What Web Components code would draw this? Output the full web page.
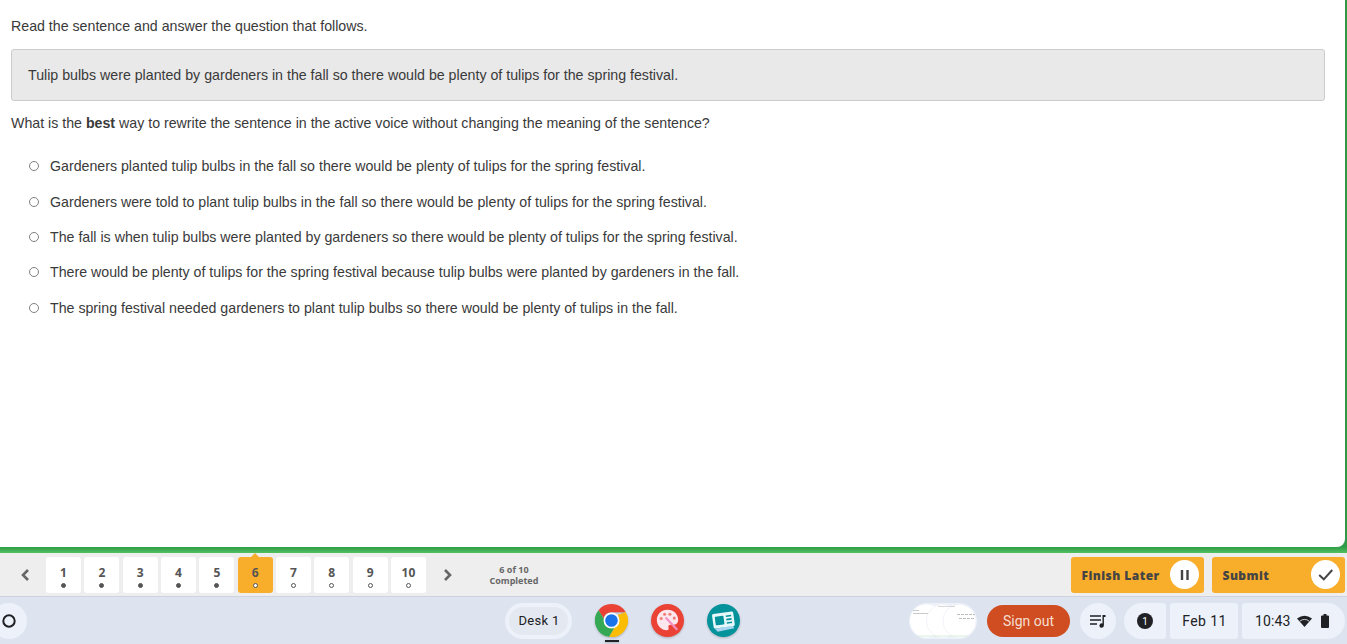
<!DOCTYPE html>
<html lang="en">
<head>
<meta charset="utf-8">
<title>Test</title>
<style>
  html, body { margin: 0; height: 100%; overflow: hidden; }
  body { display: flex; flex-direction: column; height: 644px; font-family: "Liberation Sans", Arial, sans-serif; }
</style>
</head>
<body>
<test-page>
  <answer-option>Gardeners planted tulip bulbs in the fall so there would be plenty of tulips for the spring festival.</answer-option>
  <answer-option>Gardeners were told to plant tulip bulbs in the fall so there would be plenty of tulips for the spring festival.</answer-option>
  <answer-option>The fall is when tulip bulbs were planted by gardeners so there would be plenty of tulips for the spring festival.</answer-option>
  <answer-option>There would be plenty of tulips for the spring festival because tulip bulbs were planted by gardeners in the fall.</answer-option>
  <answer-option>The spring festival needed gardeners to plant tulip bulbs so there would be plenty of tulips in the fall.</answer-option>
</test-page>
<question-nav></question-nav>
<os-shelf></os-shelf>
<script>
class TestPage extends HTMLElement {
  constructor() {
    super();
    this.attachShadow({ mode: 'open' });
    this.shadowRoot.innerHTML = `
    <style>
      :host {
        display: block;
        height: 553px;
        background: linear-gradient(#2e9a49 541px, #2f9c47 547px, #52c061 553px);
        flex: none;
      }
      .sheet {
        box-sizing: border-box;
        height: 547px;
        margin-right: 2px;
        background: white;
        border-bottom-right-radius: 8px;
        padding: 18px 20px 0 11px;
        font-size: 14.2px;
        color: #3a3a3a;
      }
      p { margin: 0; line-height: 16px; }
      .stem {
        box-sizing: border-box;
        height: 52px;
        margin: 15px 0 14px;
        padding: 17px 16px;
        background: #e9e9e9;
        border: 1px solid #ccc;
        border-radius: 3px;
        line-height: 16px;
      }
      .options { display: flex; flex-direction: column; gap: 19.3px; margin-top: 27.45px; padding-left: 18px; }
    </style>
    <div class="sheet">
      <p>Read the sentence and answer the question that follows.</p>
      <div class="stem">Tulip bulbs were planted by gardeners in the fall so there would be plenty of tulips for the spring festival.</div>
      <p>What is the <b>best</b> way to rewrite the sentence in the active voice without changing the meaning of the sentence?</p>
      <div class="options"><slot></slot></div>
    </div>`;
  }
}

class AnswerOption extends HTMLElement {
  constructor() {
    super();
    this.attachShadow({ mode: 'open' });
    this.shadowRoot.innerHTML = `
    <style>
      :host { display: flex; align-items: center; gap: 11px; height: 16px; line-height: 16px; }
      i { box-sizing: border-box; width: 10px; height: 10px; border: 1px solid #808080; border-radius: 50%; background: #fff; flex: none; }
    </style>
    <i></i><span><slot></slot></span>`;
  }
}

class NavItem extends HTMLElement {
  constructor() {
    super();
    this.attachShadow({ mode: 'open' });
    const done = this.hasAttribute('done');
    const current = this.hasAttribute('current');
    this.shadowRoot.innerHTML = `
    <style>
      :host {
        position: relative;
        box-sizing: border-box;
        display: flex;
        flex-direction: column;
        align-items: center;
        width: 35px;
        height: 36px;
        padding-top: 9px;
        flex: none;
        background: ${current ? '#f9ae2b' : 'white'};
        border-radius: 3px;
        color: #555;
        font: 700 12px/14px "Open Sans", sans-serif;
      }
      .dot {
        box-sizing: border-box;
        width: 5px;
        height: 5px;
        margin-top: 3px;
        border-radius: 50%;
        border: 1px solid #555;
        background: ${done ? '#555' : 'white'};
      }
      .tip {
        position: absolute;
        top: -4px;
        left: 50%;
        margin-left: -5px;
        border: 5px solid transparent;
        border-top: 0;
        border-bottom-color: #f9ae2b;
        display: ${current ? 'block' : 'none'};
      }
    </style>
    <span class="tip"></span>
    <span>${this.getAttribute('n')}</span>
    <span class="dot"></span>`;
  }
}

class ActionButton extends HTMLElement {
  constructor() {
    super();
    this.attachShadow({ mode: 'open' });
    const icon = this.getAttribute('icon') == 'pause'
      ? '<path d="M6 4v10M11.500 4v10" stroke="#444" stroke-width="2.400" fill="none"/>'
      : '<path d="M2.200 9l4.600 4.300L15.200 4" stroke="#444" stroke-width="2" fill="none"/>';
    this.shadowRoot.innerHTML = `
    <style>
      :host {
        box-sizing: border-box;
        display: flex;
        align-items: center;
        justify-content: space-between;
        width: 133px;
        height: 36px;
        padding: 0 5px 0 10.5px;
        background: #f9ae2b;
        border-radius: 3px;
        color: #444;
        font: 800 12px/14px "Open Sans", sans-serif;
        letter-spacing: .45px;
      }
      .label { padding-top: 2px; }
      .round { display: flex; align-items: center; justify-content: center; width: 29px; height: 29px; background: white; border-radius: 50%; }
    </style>
    <span class="label"><slot></slot></span>
    <span class="round"><svg width="18" height="18" viewBox="0 0 18 18">${icon}</svg></span>`;
  }
}

class QuestionNav extends HTMLElement {
  constructor() {
    super();
    this.attachShadow({ mode: 'open' });
    let items = '';
    for (let n = 1; n <= 10; n++) {
      items += `<nav-item n="${n}" ${n <= 5 ? 'done' : ''} ${n == 6 ? 'current' : ''}></nav-item>`;
    }
    this.shadowRoot.innerHTML = `
    <style>
      :host {
        box-sizing: border-box;
        display: flex;
        align-items: center;
        height: 44px;
        flex: none;
        padding: 0 2px 0 19px;
        background: #eee;
        border-bottom: 1px solid #cdd2de;
      }
      .items { display: flex; gap: 3.33px; margin: 0 15px 0 14px; }
      svg { display: block; flex: none; }
      .count { width: 60px; margin-left: 30px; text-align: center; color: #666; font: 700 9px/11px "Open Sans", sans-serif; }
      .actions { display: flex; gap: 8px; margin-left: auto; }
    </style>
    <svg width="13" height="14" viewBox="0 0 13 14"><path d="M9 2L4 7l5 5" stroke="#666" stroke-width="2.600" fill="none"/></svg>
    <div class="items">${items}</div>
    <svg width="13" height="14" viewBox="0 0 13 14"><path d="M4 2l5 5-5 5" stroke="#666" stroke-width="2.600" fill="none"/></svg>
    <div class="count">6 of 10<br>Completed</div>
    <div class="actions">
      <action-button icon="pause">Finish Later</action-button>
      <action-button icon="check">Submit</action-button>
    </div>`;
  }
}

class OsShelf extends HTMLElement {
  constructor() {
    super();
    this.attachShadow({ mode: 'open' });
    this.shadowRoot.innerHTML = `
    <style>
      :host {
        box-sizing: border-box;
        display: flex;
        align-items: center;
        flex: 1;
        padding-right: 2px;
        background: #dde3ef;
        color: #202124;
        font: 400 14px/16px Roboto, sans-serif;
      }
      .launcher { display: flex; align-items: center; justify-content: flex-end; box-sizing: border-box; width: 36px; height: 36px; margin-left: -9px; padding-right: 11px; border-radius: 50%; background: #edf1f9; }
      .desk { box-sizing: border-box; display: flex; align-items: center; justify-content: center; width: 67px; height: 36px; margin-left: 478px; border: 4px solid #edf1f9; border-radius: 18px; background: #e4e8f0; font-size: 13px; letter-spacing: .3px; padding-left: 1px; }
      .apps { display: flex; gap: 23px; margin-left: 23px; }
      .app { position: relative; width: 33px; height: 33px; filter: drop-shadow(0 1px 1px rgba(0, 0, 0, .22)); }
      .app svg { display: block; }
      .running::after { content: ''; position: absolute; left: 10px; bottom: -5px; width: 14px; height: 2px; background: #202124; }
      .tote { width: 68px; height: 36px; margin-left: 169px; }
      .tote svg { display: block; }
      .signout { display: flex; align-items: center; justify-content: center; width: 83px; height: 32px; margin-left: 10px; border-radius: 16px; background: #cf4d20; color: #f5ddd2; font-size: 14px; }
      .pill { display: flex; align-items: center; justify-content: center; height: 36px; background: #edf1f9; }
      .music { width: 36px; border-radius: 50%; margin-left: 10px; }
      .badge { width: 42px; margin-left: 8px; border-radius: 18px 3px 3px 18px; }
      .date { width: 68px; margin-left: 4px; border-radius: 3px; letter-spacing: .4px; padding-left: 1px; box-sizing: border-box; }
      .clock { box-sizing: border-box; width: 103px; margin-left: 4px; padding-left: 13px; justify-content: flex-start; border-radius: 3px 18px 18px 3px; letter-spacing: .1px; }
      .wifi { margin-left: 7px; }
      .battery { margin-left: 9px; }
    </style>
    <div class="launcher"><svg width="14" height="14" viewBox="0 0 14 14"><circle cx="7" cy="7" r="5.700" stroke="#202124" stroke-width="2" fill="none"/></svg></div>
    <div class="desk">Desk 1</div>
    <div class="apps">
      <div class="app running">
        <svg width="33" height="33" viewBox="0 0 34 34">
          <path d="M17 0a17 17 0 0 1 14.700 8.500H17a8.500 8.500 0 0 0-8.200 6.300L3.600 6.400A17 17 0 0 1 17 0z" fill="#ea4335"/>
          <path d="M3.600 6.400l7.900 13.100a8.500 8.500 0 0 0 8.300 5.100L14.700 33.800A17 17 0 0 1 3.600 6.400z" fill="#34a853"/>
          <path d="M31.700 8.500A17 17 0 0 1 14.700 33.800l7.600-13.300A8.500 8.500 0 0 0 23.500 11z" fill="#fbbc04"/>
          <circle cx="17" cy="17" r="8.200" fill="#fff"/><circle cx="17" cy="17" r="6.500" fill="#1a73e8"/>
        </svg>
      </div>
      <div class="app">
        <svg width="33" height="33" viewBox="0 0 34 34">
          <circle cx="17" cy="17" r="17" fill="#ea4335"/>
          <path d="M17 6c-6.500 0-11 4.500-11 10.500S11 27 16 27c2 0 2.500-1.200 2-2.500-.6-1.600.4-3 2-3h3c3 0 5-2 5-5C28 10.500 23.500 6 17 6z" fill="#fde7ef"/>
          <circle cx="10.500" cy="15" r="1.600" fill="#f07f73"/><circle cx="14" cy="10.500" r="1.600" fill="#f07f73"/><circle cx="19.500" cy="10.500" r="1.600" fill="#f07f73"/><circle cx="24" cy="14.500" r="1.600" fill="#f07f73"/>
          <path d="M15 14l12 12.500" stroke="#f48fc0" stroke-width="2.200"/>
        </svg>
      </div>
      <div class="app">
        <svg width="33" height="33" viewBox="0 0 34 34">
          <circle cx="17" cy="17" r="17" fill="#05939b"/>
          <path d="M8 25.500l19-3 1 2.500-17 3.500z" fill="#a9d4f0"/>
          <g transform="rotate(-8 17 17)">
            <rect x="6" y="9" width="22" height="15" rx="1.500" fill="#e6f8fa"/>
            <rect x="8.500" y="12" width="9" height="9" rx="1" fill="#05939b"/>
            <path d="M20 13h5.500M20 16.500h5.500M20 20h5.500" stroke="#05939b" stroke-width="1.600"/>
          </g>
        </svg>
      </div>
    </div>
    <div class="tote">
      <svg width="68" height="36" viewBox="0 0 68 36">
        <rect width="68" height="36" rx="18" fill="#edf1f9"/>
        <circle cx="17.500" cy="18" r="16.500" fill="#fff"/>
        <circle cx="34" cy="18" r="16.500" fill="#fff" stroke="#f2f4f9"/>
        <circle cx="50.500" cy="18" r="16.500" fill="#fff" stroke="#f2f4f9"/>
        <path d="M4 7.500h6M4 10.500h15" stroke="#c9c9c9"/>
        <path d="M29 3.500h17" stroke="#d8d8d8"/>
        <path d="M48 11.500h18M50 15.500h16" stroke="#bdbdbd" stroke-dasharray="3 1"/>
        <path d="M9 33h50" stroke="#dcefdc"/>
      </svg>
    </div>
    <div class="signout">Sign out</div>
    <div class="pill music"><svg width="18" height="14" viewBox="0 0 18 14"><path d="M1 2h11M1 6h11M1 10h7" stroke="#202124" stroke-width="1.500"/><path d="M13.500 1h3v2h-1.600v8.500a2.200 2.200 0 1 1-1.400-2z" fill="#202124"/></svg></div>
    <div class="pill badge"><svg width="16" height="16" viewBox="0 0 16 16"><circle cx="8" cy="8" r="8" fill="#202124"/><text x="8" y="11.500" text-anchor="middle" fill="#fff" font-family="Roboto" font-size="10">1</text></svg></div>
    <div class="pill date">Feb 11</div>
    <div class="pill clock"><span>10:43</span>
      <svg class="wifi" width="15" height="12" viewBox="0 0 15 12"><path d="M0 3.500Q7.500-2 15 3.500L7.500 12z" fill="#202124"/><path d="M2.700 6.200Q7.500 2.600 12.300 6.200" stroke="#edf1f9" stroke-width=".8" fill="none"/></svg>
      <svg class="battery" width="8" height="14" viewBox="0 0 8 14"><path d="M2.500 0h3v1.500h1.500a1 1 0 0 1 1 1V13a1 1 0 0 1-1 1H1a1 1 0 0 1-1-1V2.500a1 1 0 0 1 1-1h1.500z" fill="#202124"/></svg>
    </div>`;
  }
}

customElements.define('test-page', TestPage);
customElements.define('answer-option', AnswerOption);
customElements.define('nav-item', NavItem);
customElements.define('action-button', ActionButton);
customElements.define('question-nav', QuestionNav);
customElements.define('os-shelf', OsShelf);
</script>
</body>
</html>
